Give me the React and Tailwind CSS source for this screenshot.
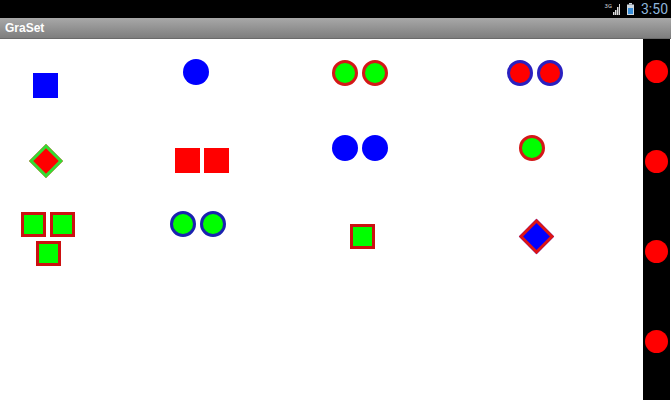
import React from "react";

const Circle = ({ cls }) => <div className={`w-[26px] h-[26px] rounded-full shrink-0 ${cls}`} />;
const Sq = ({ cls }) => <div className={`w-[25px] h-[25px] shrink-0 ${cls}`} />;

export default function App() {
  return (
    <div className="w-[671px] h-[400px] flex flex-col bg-white overflow-hidden" style={{ fontFamily: '"Roboto", "Liberation Sans", sans-serif' }}>
      {/* status bar */}
      <div className="h-[18px] bg-black flex items-center justify-end pr-[3px] shrink-0">
        <span className="text-[6px] leading-none text-gray-300 self-start mt-[3px] mr-[1px]">3G</span>
        <svg width="7" height="11" viewBox="0 0 7 11" className="mr-[7px]">
          <rect x="0" y="8" width="1.5" height="3" fill="#ddd" />
          <rect x="2" y="6" width="1.5" height="5" fill="#ddd" />
          <rect x="4" y="3" width="1.5" height="8" fill="#ddd" />
          <rect x="6" y="0" width="1" height="11" fill="#ddd" />
        </svg>
        <svg width="7" height="12" viewBox="0 0 7 12" className="mr-[7px]">
          <rect x="2" y="0" width="3" height="1.5" fill="#cfd8e0" />
          <rect x="0" y="1.5" width="7" height="10.5" fill="#cfd8e0" />
          <rect x="1" y="5" width="5" height="6" fill="#3a8fd8" />
        </svg>
        <span className="text-[14px] leading-none text-[#8fb6dc]">3:50</span>
      </div>
      {/* title bar */}
      <div className="h-[21px] shrink-0 bg-gradient-to-b from-[#a8a8a8] to-[#7e7e7e] flex items-center pl-[5px] border-b border-[#6a6a6a]">
        <span className="text-[12px] font-bold text-white leading-none" style={{ fontFamily: '"Liberation Sans", sans-serif' }}>GraSet</span>
      </div>
      {/* content */}
      <div className="flex flex-1 min-h-0">
        <div className="w-[643px] grid grid-cols-[160px_160px_175px_148px] grid-rows-[90px_76px_auto] items-start">
          {/* row 1 */}
          <div className="ml-[33px] mt-[34px]"><Sq cls="bg-[#0000ff]" /></div>
          <div className="ml-[23px] mt-[20px]"><Circle cls="bg-[#0000ff]" /></div>
          <div className="ml-[12px] mt-[21px] flex gap-[4px]">
            <Circle cls="bg-[#00ff00] border-[3px] border-[#d41818]" />
            <Circle cls="bg-[#00ff00] border-[3px] border-[#d41818]" />
          </div>
          <div className="ml-[12px] mt-[21px] flex gap-[4px]">
            <Circle cls="bg-[#ff0000] border-[3px] border-[#2a20c0]" />
            <Circle cls="bg-[#ff0000] border-[3px] border-[#2a20c0]" />
          </div>
          {/* row 2 */}
          <div className="ml-[34px] mt-[20px]">
            <div className="w-[24px] h-[24px] rotate-45 bg-[#ff0000] border-[3px] border-[#33dd33]" />
          </div>
          <div className="ml-[15px] mt-[19px] flex gap-[4px]">
            <Sq cls="bg-[#ff0000]" />
            <Sq cls="bg-[#ff0000]" />
          </div>
          <div className="ml-[12px] mt-[6px] flex gap-[4px]">
            <Circle cls="bg-[#0000ff]" />
            <Circle cls="bg-[#0000ff]" />
          </div>
          <div className="ml-[24px] mt-[6px]">
            <Circle cls="bg-[#00ff00] border-[3px] border-[#d41818]" />
          </div>
          {/* row 3 */}
          <div className="ml-[21px] mt-[7px] flex flex-col gap-[4px]">
            <div className="flex gap-[4px]">
              <Sq cls="bg-[#00ff00] border-[3px] border-[#cc1111]" />
              <Sq cls="bg-[#00ff00] border-[3px] border-[#cc1111]" />
            </div>
            <div className="ml-[15px]">
              <Sq cls="bg-[#00ff00] border-[3px] border-[#cc1111]" />
            </div>
          </div>
          <div className="ml-[10px] mt-[6px] flex gap-[4px]">
            <Circle cls="bg-[#00ff00] border-[3px] border-[#1a22b0]" />
            <Circle cls="bg-[#00ff00] border-[3px] border-[#1a22b0]" />
          </div>
          <div className="ml-[30px] mt-[19px]">
            <Sq cls="bg-[#00ff00] border-[3px] border-[#cc1111]" />
          </div>
          <div className="ml-[29px] mt-[19px]">
            <div className="w-[25px] h-[25px] rotate-45 bg-[#0000ff] border-[3px] border-[#dd1515]" />
          </div>
        </div>
        <div className="w-[27px] bg-black flex flex-col items-center pt-[21px] gap-[67px] shrink-0">
          <div className="w-[23px] h-[23px] rounded-full bg-[#ff0000] shrink-0" />
          <div className="w-[23px] h-[23px] rounded-full bg-[#ff0000] shrink-0" />
          <div className="w-[23px] h-[23px] rounded-full bg-[#ff0000] shrink-0" />
          <div className="w-[23px] h-[23px] rounded-full bg-[#ff0000] shrink-0" />
        </div>
      </div>
    </div>
  );
}
